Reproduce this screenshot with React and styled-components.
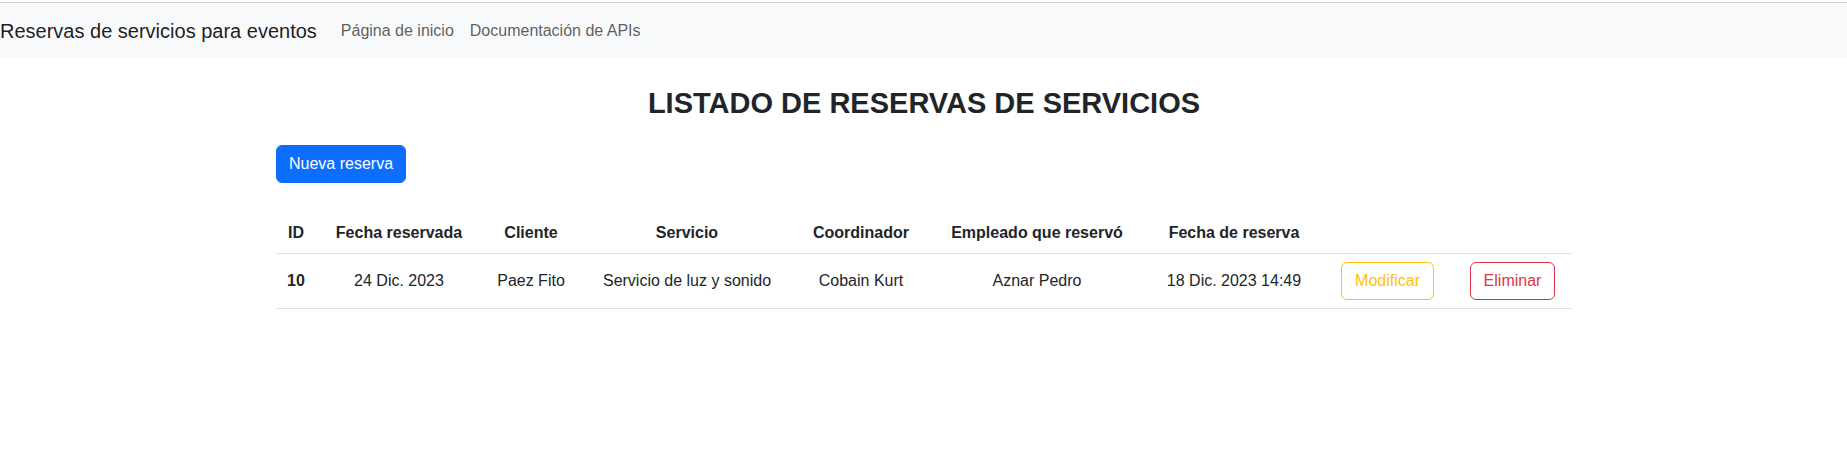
import React from "react";
import styled, { createGlobalStyle } from "styled-components";

const reservas = [
  {
    id: 10,
    fechaReservada: "24 Dic. 2023",
    cliente: "Paez Fito",
    servicio: "Servicio de luz y sonido",
    coordinador: "Cobain Kurt",
    empleado: "Aznar Pedro",
    fechaReserva: "18 Dic. 2023 14:49",
  },
];

// anchos de columna tomados del listado original
const columns = [
  { label: "ID", width: 40 },
  { label: "Fecha reservada", width: 166 },
  { label: "Cliente", width: 98 },
  { label: "Servicio", width: 214 },
  { label: "Coordinador", width: 134 },
  { label: "Empleado que reservó", width: 218 },
  { label: "Fecha de reserva", width: 176 },
  { label: "", width: 131 },
  { label: "", width: 119 },
];

const App = () => {
  return (
    <React.Fragment>
      <GlobalStyle />
      <Navbar>
        <Brand>Reservas de servicios para eventos</Brand>
        <NavLinks>
          <NavLink href="#">Página de inicio</NavLink>
          <NavLink href="#">Documentación de APIs</NavLink>
        </NavLinks>
      </Navbar>
      <Container>
        <Title>LISTADO DE RESERVAS DE SERVICIOS</Title>
        <PrimaryButton>Nueva reserva</PrimaryButton>
        <Table>
          <colgroup>
            {columns.map((c, i) => (
              <Col key={i} $width={c.width} />
            ))}
          </colgroup>
          <thead>
            <tr>
              {columns.map((c, i) => (
                <Th key={i}>{c.label}</Th>
              ))}
            </tr>
          </thead>
          <tbody>
            {reservas.map((r) => (
              <tr key={r.id}>
                <Td $bold>{r.id}</Td>
                <Td>{r.fechaReservada}</Td>
                <Td>{r.cliente}</Td>
                <Td>{r.servicio}</Td>
                <Td>{r.coordinador}</Td>
                <Td>{r.empleado}</Td>
                <Td>{r.fechaReserva}</Td>
                <Td>
                  <OutlineButton $color="#ffc107">Modificar</OutlineButton>
                </Td>
                <Td>
                  <OutlineButton $color="#dc3545">Eliminar</OutlineButton>
                </Td>
              </tr>
            ))}
          </tbody>
        </Table>
      </Container>
    </React.Fragment>
  );
};

export default App;

const GlobalStyle = createGlobalStyle`
  body {
    margin: 0;
    background: #fff;
    color: #212529;
    font-family: "Liberation Sans", Arial, sans-serif;
    font-size: 16px;
    line-height: 1.5;
  }
`;

const Navbar = styled.nav`
  display: flex;
  align-items: center;
  margin-top: 2px;
  height: 55px;
  border-top: 1px solid #d4d4d4;
  background-color: #f8f9fa;
`;

const Brand = styled.a`
  font-size: 20px;
  line-height: 30px;
  color: rgba(0, 0, 0, 0.9);
  margin-right: 16px;
  white-space: nowrap;
`;

const NavLinks = styled.div`
  display: flex;
`;

const NavLink = styled.a`
  padding: 8px;
  color: rgba(0, 0, 0, 0.65);
  text-decoration: none;
`;

const Container = styled.main`
  width: 1296px;
  margin: 0 auto;
  padding-left: 1px;
`;

const Title = styled.h2`
  margin: 28px 0 24px;
  text-align: center;
  font-size: 29px;
  font-weight: 700;
  line-height: 1.2;
  color: #212529;
`;

const PrimaryButton = styled.button`
  display: block;
  padding: 6px 12px;
  font-family: inherit;
  font-size: 16px;
  line-height: 24px;
  color: #fff;
  background: #0d6efd;
  border: 1px solid #0d6efd;
  border-radius: 6px;
  cursor: pointer;
`;

const Table = styled.table`
  width: 100%;
  margin-top: 30px;
  table-layout: fixed;
  border-collapse: collapse;
  vertical-align: top;
`;

const Col = styled.col`
  width: ${(p) => p.$width}px;
`;

const Th = styled.th`
  padding: 8px;
  font-weight: 700;
  text-align: center;
  border-bottom: 1px solid #dee2e6;
  white-space: nowrap;
`;

const Td = styled.td`
  padding: 8px;
  text-align: center;
  font-weight: ${(p) => (p.$bold ? 700 : 400)};
  border-bottom: 1px solid #dee2e6;
  white-space: nowrap;
`;

const OutlineButton = styled.button`
  padding: 6px 13px;
  font-family: inherit;
  font-size: 16px;
  line-height: 24px;
  color: ${(p) => p.$color};
  background: transparent;
  border: 1px solid ${(p) => p.$color};
  border-radius: 6px;
  cursor: pointer;
`;
